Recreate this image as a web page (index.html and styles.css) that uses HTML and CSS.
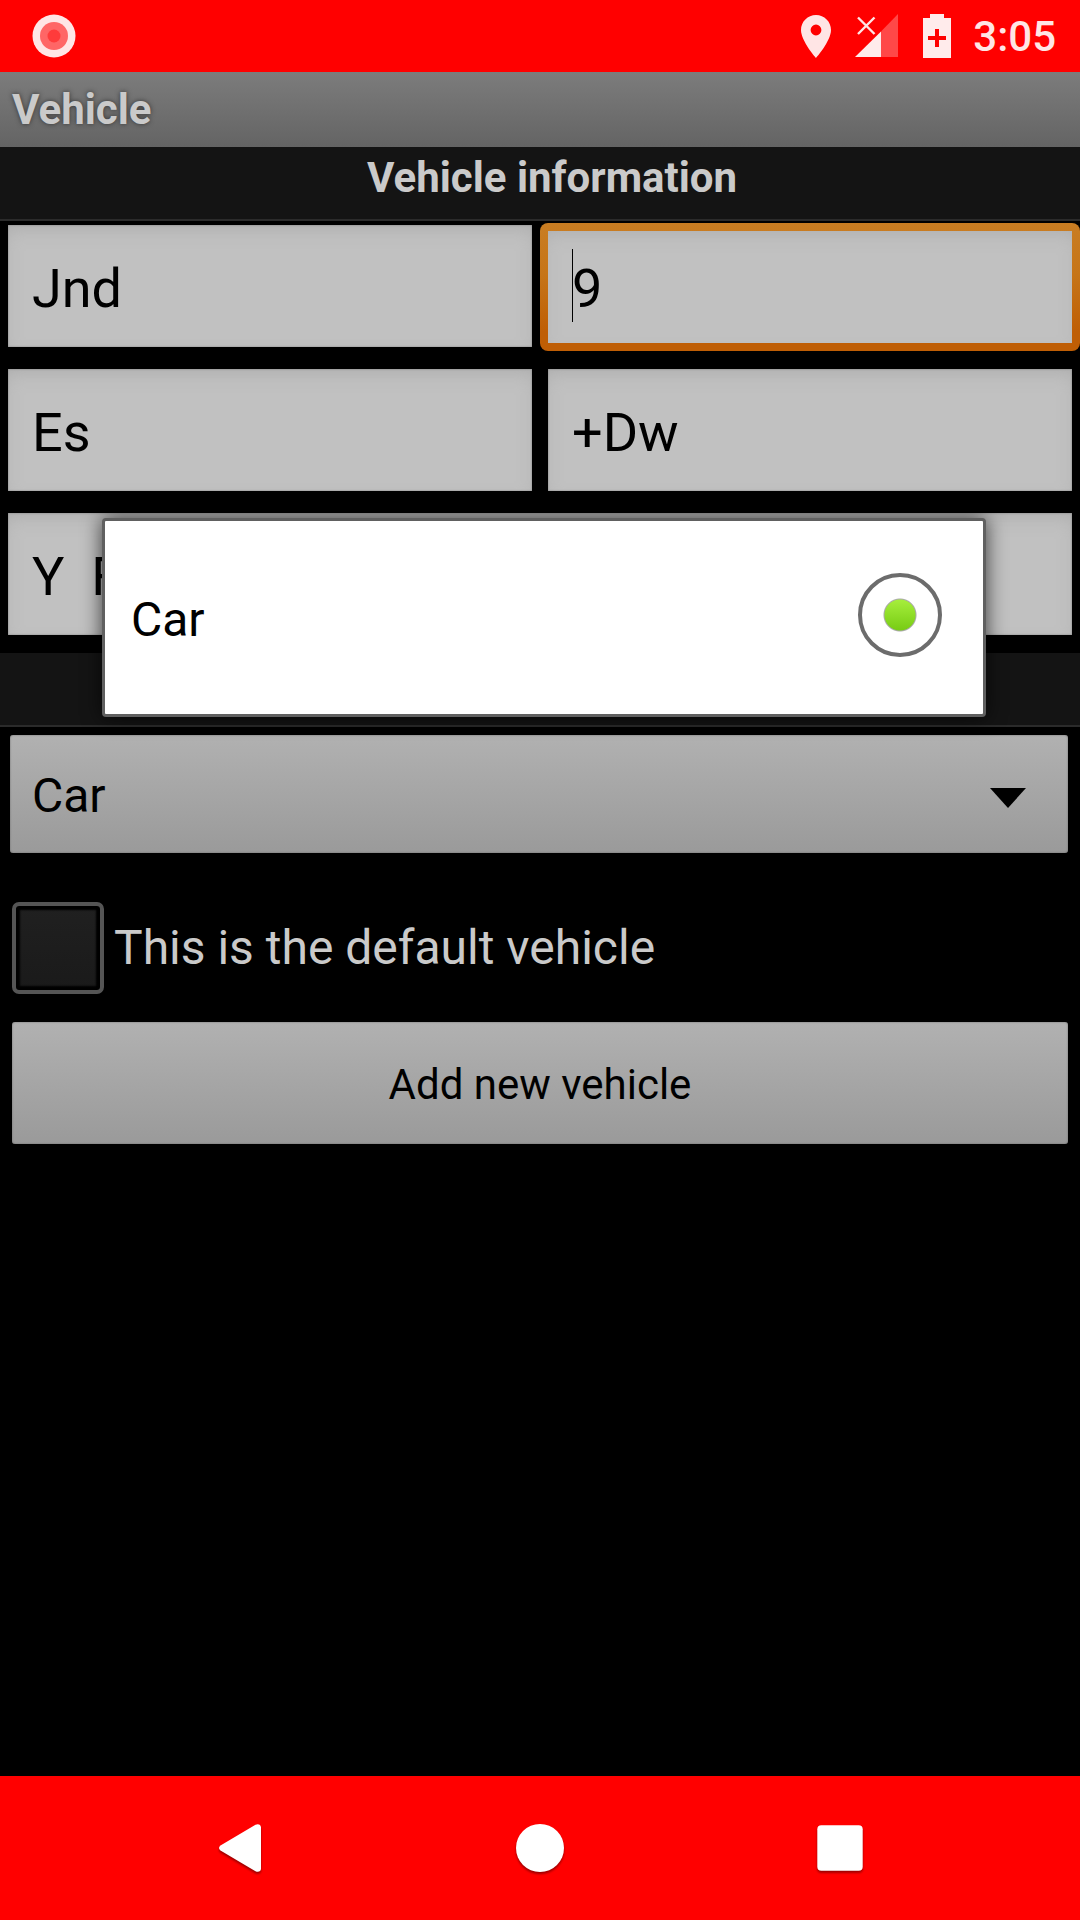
FILE: index.html
```html
<!DOCTYPE html>
<html lang="en">
<head>
<meta charset="utf-8">
<meta name="viewport" content="width=device-width, initial-scale=1">
<title>Vehicle</title>
<link rel="stylesheet" href="styles.css">
</head>
<body>
<header class="status-bar">
  <svg class="status-icon" width="44" height="44" viewBox="0 0 44 44" aria-hidden="true">
    <circle cx="22" cy="22" r="21.5" fill="#ffe5e5"/>
    <circle cx="22" cy="22" r="14" fill="#ff6666"/>
    <circle cx="22" cy="22" r="6.5" fill="#ff3b3b"/>
  </svg>
  <div class="status-tray">
    <svg width="30" height="44" viewBox="0 0 30 44" aria-hidden="true">
      <path fill="#ffe5e5" fill-rule="evenodd" d="M15 1C6.700 1 0 7.700 0 16c0 11 15 28 15 28s15-17 15-28C30 7.700 23.300 1 15 1zm0 9.600a5.400 5.400 0 1 1 0 10.800 5.400 5.400 0 0 1 0-10.800z"/>
    </svg>
    <svg width="44" height="44" viewBox="0 0 44 44" aria-hidden="true">
      <path fill="#ff4848" d="M26 17.500L43 0v43H26z"/>
      <path fill="#ffebeb" d="M0 43L26 17.500V43z"/>
      <path fill="none" stroke="#ffe5e5" stroke-width="2.400" d="M3 3.500l16.500 16.500M19.500 3.500L3 20"/>
    </svg>
    <svg width="28" height="44" viewBox="0 0 28 44" aria-hidden="true">
      <path fill="#ffebeb" fill-rule="evenodd" d="M7 0h14v4h7v40H0V4h7zM12 15v7H5v4h7v7h4v-7h7v-4h-7v-7z"/>
    </svg>
    <span class="clock">3:05</span>
  </div>
</header>

<h1 class="title-bar">Vehicle</h1>

<main class="content">
  <form class="vehicle-form">
    <h2 class="section">Vehicle information</h2>
    <div class="fields">
      <div class="cell"><input class="field" type="text" value="Jnd" aria-label="Make"></div>
      <div class="cell"><input class="field field-focused" type="text" value="9" aria-label="Model"><span class="caret"></span></div>
      <div class="cell"><input class="field" type="text" value="Es" aria-label="Year"></div>
      <div class="cell"><input class="field" type="text" value="+Dw" aria-label="Plate"></div>
      <div class="cell cell-wide"><input class="field" type="text" value="Y  F" aria-label="Notes"></div>
    </div>
    <div class="section"></div>
    <div class="spinner">
      <select class="spinner-select" aria-label="Vehicle type"><option>Car</option></select>
      <svg class="spinner-arrow" width="36" height="20" viewBox="0 0 36 20" aria-hidden="true"><path d="M0 0h36L18 20z"/></svg>
    </div>
    <label class="check-row"><input class="check" type="checkbox"><span>This is the default vehicle</span></label>
    <button class="submit" type="button">Add new vehicle</button>
  </form>

  <div class="popup" role="dialog" aria-label="Vehicle type">
    <label class="option"><span>Car</span><input class="radio" type="radio" name="type" checked></label>
  </div>
</main>

<nav class="nav-bar">
  <button class="nav-button" type="button" aria-label="Back">
    <svg class="nav-icon" width="48" height="48" viewBox="0 0 48 48"><path fill="#fff" d="M4.500 21.500L39.500 .8C42 -.6 45 .5 45 3.500v41c0 3-3 4.100-5.500 2.700L4.500 26.500C2.500 25 2.500 23 4.500 21.500z"/></svg>
  </button>
  <button class="nav-button" type="button" aria-label="Home">
    <svg class="nav-icon" width="48" height="48" viewBox="0 0 48 48"><circle fill="#fff" cx="24" cy="24" r="24"/></svg>
  </button>
  <button class="nav-button" type="button" aria-label="Recent apps">
    <svg class="nav-icon" width="48" height="48" viewBox="0 0 48 48"><rect fill="#fff" x="1.300" y="1.300" width="45.400" height="45.400" rx="4"/></svg>
  </button>
</nav>
</body>
</html>
```
FILE: styles.css
```css
* {
  box-sizing: border-box;
}

body {
  margin: 0;
  min-height: 100vh;
  display: flex;
  flex-direction: column;
  background: #000;
  color: #cacaca;
  font-family: Roboto, "Liberation Sans", sans-serif;
}

input,
select,
button {
  margin: 0;
  border: 0;
  border-radius: 0;
  color: #000;
  font-family: inherit;
  outline: none;
  appearance: none;
}

.status-bar {
  display: flex;
  align-items: center;
  justify-content: space-between;
  height: 72px;
  padding: 0 24px 0 32px;
  background: #f00;
}

.status-tray {
  display: flex;
  align-items: center;
  gap: 24px;
}

.clock {
  margin-left: -2px;
  padding-top: 2px;
  color: #ffe5e5;
  font-size: 42px;
  font-weight: 500;
  line-height: 48px;
}

.title-bar {
  margin: 0;
  padding: 0 12px;
  background: linear-gradient(#7c7c7c, #646464);
  font-size: 42px;
  font-weight: 700;
  line-height: 75px;
  text-shadow: 0 0 5px #333;
}

.content {
  position: relative;
  flex: 1;
}

.section {
  min-height: 74px;
  margin: 0;
  padding: 6px 0 17px 24px;
  border-bottom: 2px solid #2b2b2b;
  background: #141414;
  font-size: 42px;
  font-weight: 700;
  line-height: 49px;
  text-align: center;
}

.fields {
  display: grid;
  grid-template-columns: 1fr 1fr;
}

.cell {
  position: relative;
  padding: 4px 8px 18px;
}

.cell-wide {
  grid-column: 1 / -1;
}

.field {
  display: block;
  width: 100%;
  height: 122px;
  padding: 4px 24px 0;
  background: #c1c1c1;
  box-shadow: inset 0 0 2px #777, inset 0 8px 20px -6px #aaa;
  font-size: 54px;
}

.field-focused {
  box-shadow: inset 0 8px 20px -8px #aaa;
}

.cell:has(.field-focused) {
  margin: 2px 0 14px;
  padding: 8px;
  border-radius: 8px;
  background: linear-gradient(#c97d22, #c67518 40%, #bf5e05 85%);
}

.cell .field-focused {
  height: 112px;
  padding-top: 2px;
}

.caret {
  position: absolute;
  top: 26px;
  left: 32px;
  width: 1px;
  height: 73px;
  background: #000;
}

.spinner {
  position: relative;
  margin: 8px 12px 0 10px;
}

.spinner-select,
.submit {
  display: block;
  width: 100%;
  background: linear-gradient(#b1b1b1, #9a9a9a);
  box-shadow: inset 0 0 2px #666;
  border-radius: 3px;
}

.spinner-select {
  height: 118px;
  padding: 2px 22px 0;
  font-size: 48px;
}

.spinner-arrow {
  position: absolute;
  top: 53px;
  right: 42px;
  pointer-events: none;
}

.check-row {
  display: flex;
  align-items: center;
  gap: 10px;
  margin: 49px 12px 28px;
  font-size: 48px;
  line-height: 56px;
}

.check {
  flex: none;
  width: 92px;
  height: 92px;
  border: 4px solid #555;
  border-radius: 7px;
  background: linear-gradient(#202020, #1a1a1a);
  box-shadow: inset 0 0 2px 4px #000;
}

.submit {
  width: calc(100% - 24px);
  height: 122px;
  margin: 0 12px;
  padding: 2px 0 0;
  font-size: 42px;
}

.popup {
  position: absolute;
  top: 371px;
  right: 94px;
  left: 102px;
  border: 3px solid #606060;
  border-radius: 4px;
  background: #fff;
  box-shadow: 0 0 20px rgba(0, 0, 0, 0.7);
}

.option {
  display: flex;
  align-items: center;
  justify-content: space-between;
  height: 193px;
  padding: 0 41px 0 26px;
  color: #000;
  font-size: 48px;
}

.option span {
  padding-top: 4px;
}

.radio {
  width: 84px;
  height: 84px;
  margin-bottom: 6px;
  border: 4px solid #6c6c6c;
  border-radius: 50%;
  background: radial-gradient(circle, transparent 15px, #aaa 16px, #fff 17px), linear-gradient(#a6ee3c 30%, #78cc14 70%);
}

.nav-bar {
  display: flex;
  height: 144px;
  padding: 0 90px;
  background: #f00;
}

.nav-button {
  display: flex;
  flex: 1;
  align-items: center;
  justify-content: center;
  padding: 0;
  background: none;
}

.nav-icon {
  overflow: visible;
  filter: drop-shadow(0 2px 1px rgba(0, 0, 0, 0.4));
}
```
